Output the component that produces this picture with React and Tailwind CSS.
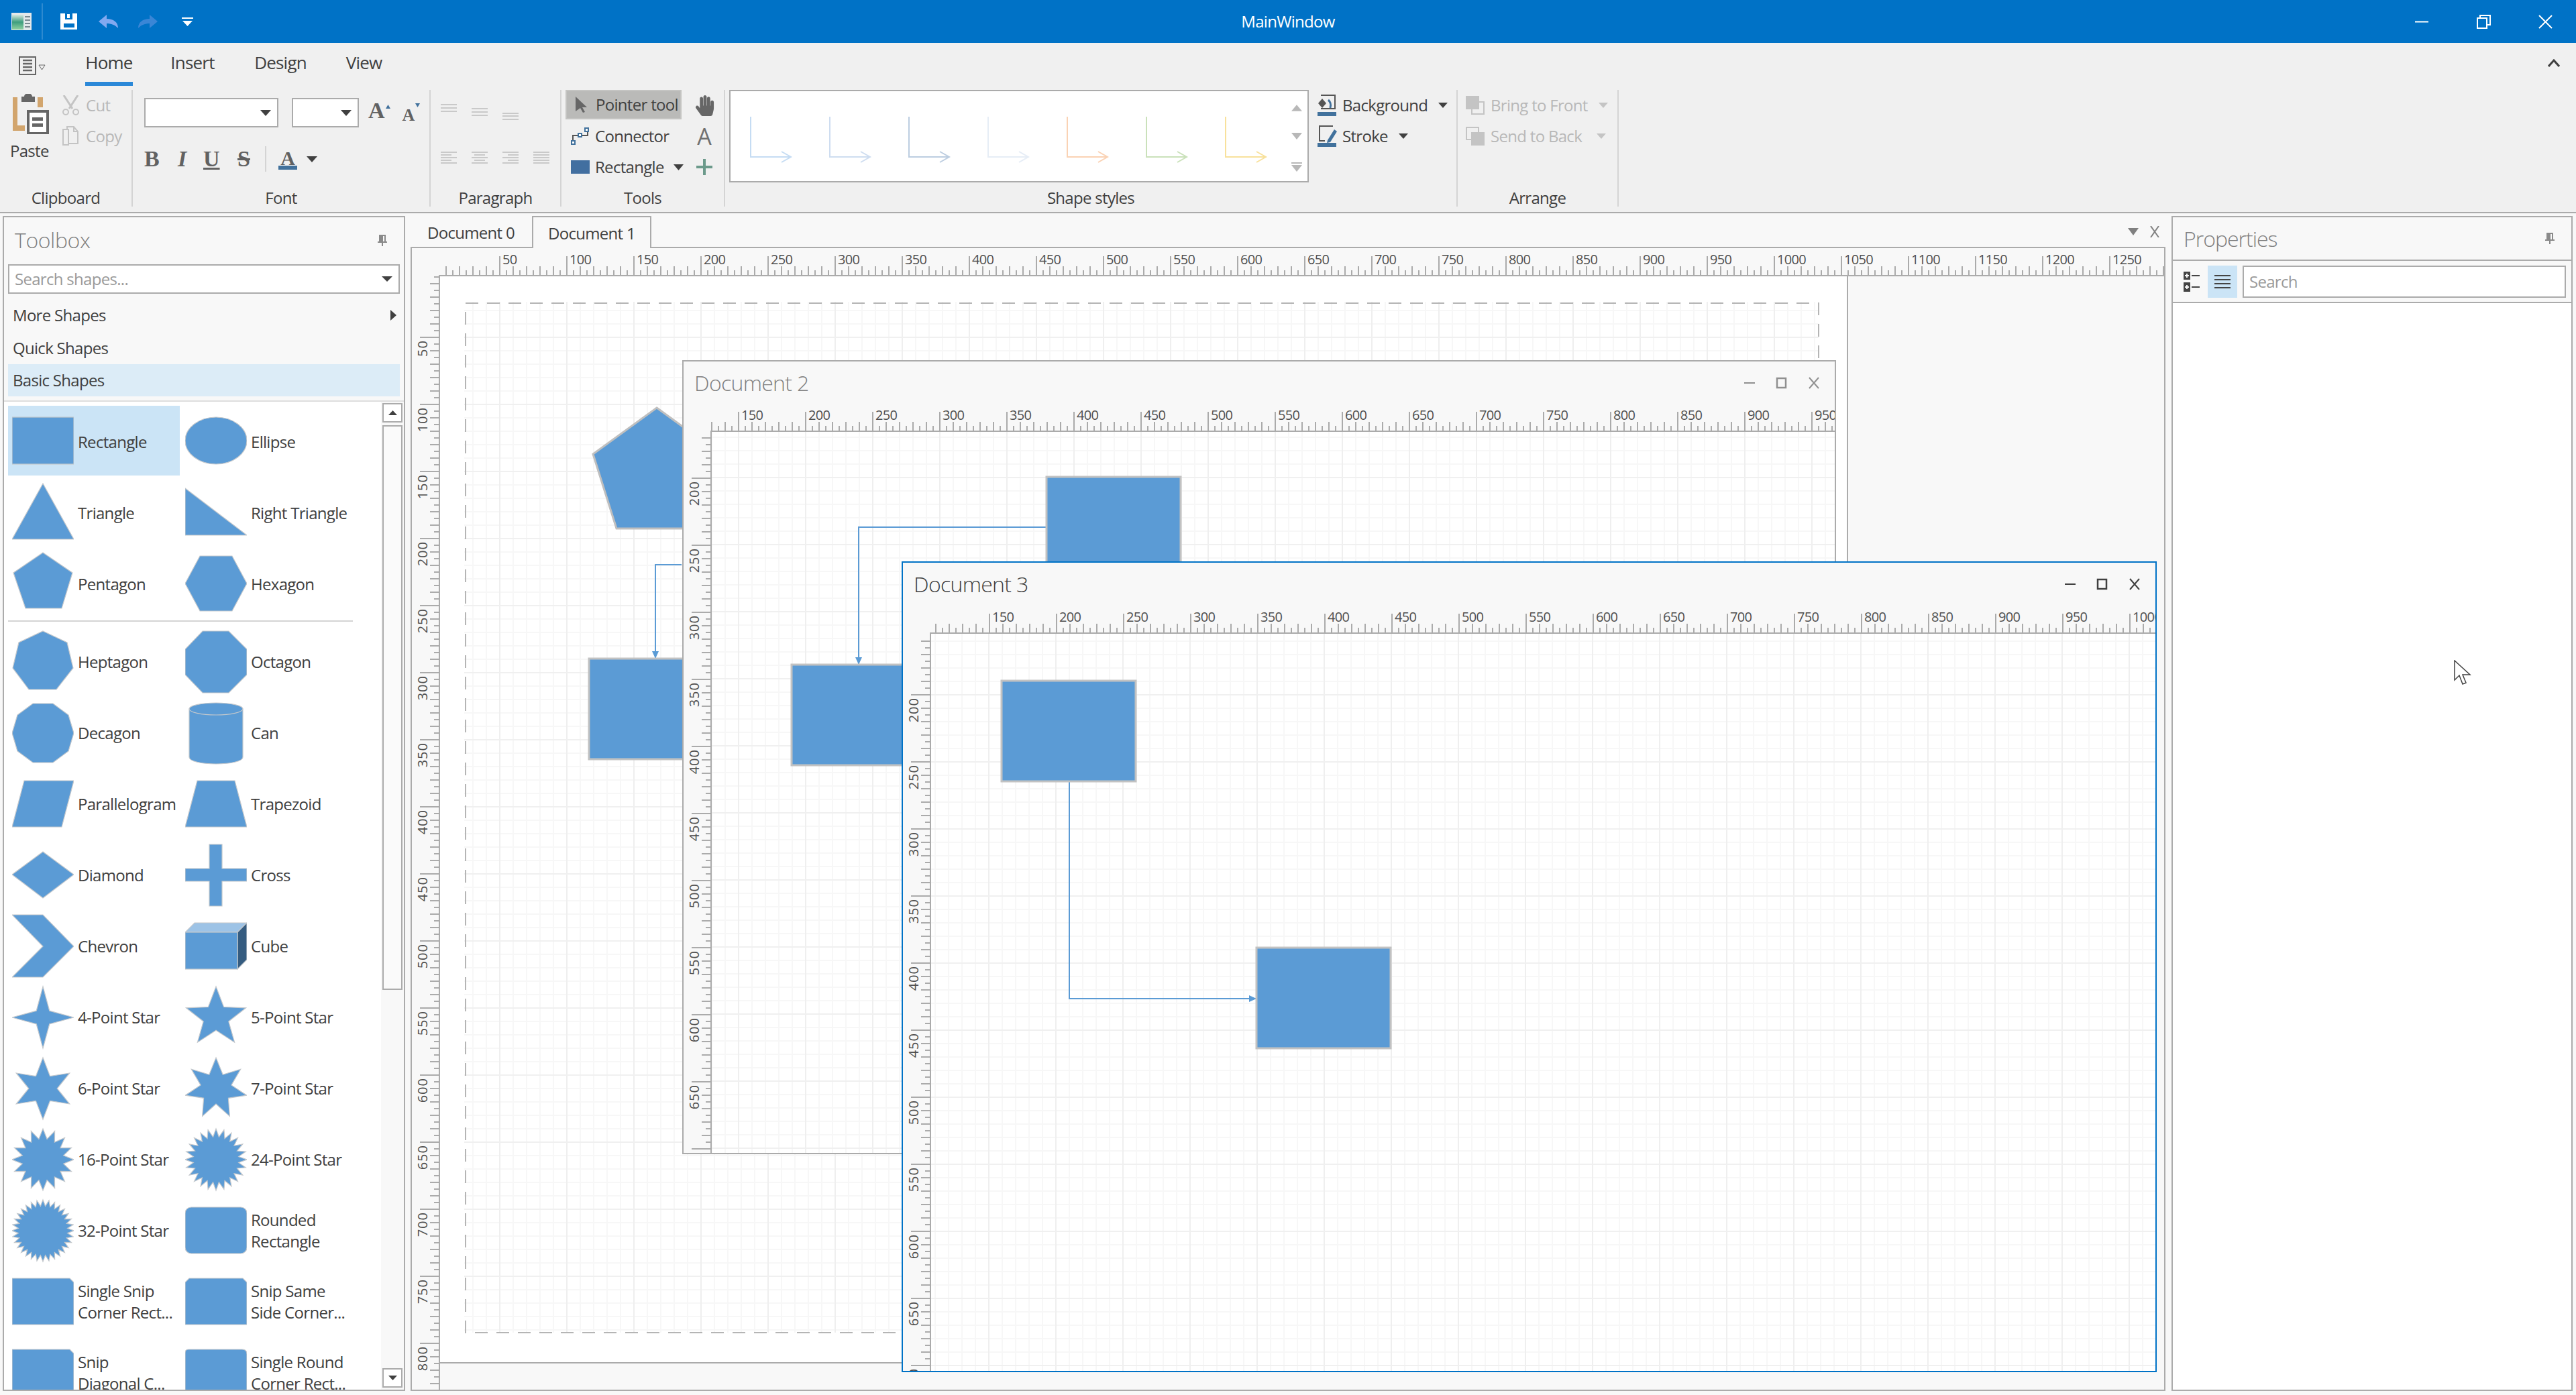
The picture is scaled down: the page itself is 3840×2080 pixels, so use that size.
import React from "react";
import { FaHandPaper } from "react-icons/fa";

const BLUE = "#5B9BD5";
const EDGE = "#C4C8CC";

function starPoints(n, rx, ry, inner, cy = 54) {
  const pts = [];
  for (let i = 0; i < n * 2; i++) {
    const r = i % 2 ? inner : 1;
    const a = -Math.PI / 2 + (i * Math.PI) / n;
    pts.push(`${(46 + rx * r * Math.cos(a)).toFixed(1)},${(cy + ry * r * Math.sin(a)).toFixed(1)}`);
  }
  return pts.join(" ");
}

const Poly = ({ points }) => <polygon points={points} />;

const firstRows = [
  { label: ["Rectangle"], selected: true, art: <rect x="0" y="17" width="92" height="70" /> },
  { label: ["Ellipse"], art: <ellipse cx="46" cy="52" rx="46" ry="35" /> },
  { label: ["Triangle"], art: <Poly points="46,10 92,93 0,93" /> },
  { label: ["Right Triangle"], art: <Poly points="0,17 92,87 0,87" /> },
  { label: ["Pentagon"], art: <Poly points="46,7 90,37 74,90 20,90 2,37" /> },
  { label: ["Hexagon"], art: <Poly points="22,12 70,12 92,53 70,94 22,94 0,53" /> },
];

const otherRows = [
  { label: ["Heptagon"], art: <Poly points="46,8 82,25 91,63 66,95 25,95 1,63 10,25" /> },
  { label: ["Octagon"], art: <Poly points="26,8 65,8 92,35 92,73 65,100 26,100 0,73 0,35" /> },
  { label: ["Decagon"], art: <Poly points="31,10 61,10 84,27 92,54 84,81 61,98 31,98 8,81 0,54 8,27" /> },
  {
    label: ["Can"],
    art: (
      <>
        <path d="M6 18 V90 C6 96 24 100 46 100 C68 100 86 96 86 90 V18 Z" />
        <ellipse cx="46" cy="18" rx="40" ry="9" />
      </>
    ),
  },
  { label: ["Parallelogram"], art: <Poly points="18,19 92,19 74,88 0,88" /> },
  { label: ["Trapezoid"], art: <Poly points="18,19 74,19 92,88 0,88" /> },
  { label: ["Diamond"], art: <Poly points="46,19 92,53 46,88 0,53" /> },
  { label: ["Cross"], art: <Poly points="36,8 55,8 55,44 92,44 92,63 55,63 55,100 36,100 36,63 0,63 0,44 36,44" /> },
  { label: ["Chevron"], art: <Poly points="0,7 46,7 92,54 46,100 0,100 46,54" /> },
  {
    label: ["Cube"],
    art: (
      <>
        <polygon points="0,33 14,19 92,19 78,33" fill="#9DC3E6" />
        <polygon points="78,33 92,19 92,74 78,88" fill="#355C80" />
        <rect x="0" y="33" width="78" height="55" />
      </>
    ),
  },
  { label: ["4-Point Star"], art: <Poly points={starPoints(4, 46, 46, 0.3)} /> },
  { label: ["5-Point Star"], art: <Poly points={starPoints(5, 47, 46, 0.42)} /> },
  { label: ["6-Point Star"], art: <Poly points={starPoints(6, 46, 46, 0.46)} /> },
  { label: ["7-Point Star"], art: <Poly points={starPoints(7, 47, 46, 0.5)} /> },
  { label: ["16-Point Star"], art: <Poly points={starPoints(16, 46, 46, 0.68)} /> },
  { label: ["24-Point Star"], art: <Poly points={starPoints(24, 46, 46, 0.74)} /> },
  { label: ["32-Point Star"], art: <Poly points={starPoints(32, 46, 46, 0.8)} /> },
  { label: ["Rounded", "Rectangle"], art: <rect x="0" y="19" width="92" height="69" rx="9" /> },
  { label: ["Single Snip", "Corner Rect..."], art: <Poly points="0,19 86,19 92,25 92,88 0,88" /> },
  { label: ["Snip Same", "Side Corner..."], art: <Poly points="6,19 86,19 92,25 92,88 0,88 0,25" /> },
  { label: ["Snip", "Diagonal C..."], art: <Poly points="0,19 86,19 92,25 92,88 6,88 0,82" /> },
  { label: ["Single Round", "Corner Rect..."], art: <path d="M5 19 H85 Q92 19 92 26 V88 H0 V24 Q0 19 5 19 Z" /> },
];

function ShapeItem({ item }) {
  return (
    <div className={`flex h-[104px] w-[256px] items-center gap-[6px] pl-[6px] ${item.selected ? "bg-[#CBE4F6]" : ""}`}>
      <svg width="92" height="104" viewBox="0 0 92 104" fill={BLUE} stroke={EDGE} strokeWidth="1.2" className="shrink-0">
        {item.art}
      </svg>
      <div className="pt-[3px] leading-[32px] whitespace-nowrap text-[#404040]">
        {item.label.map((line) => (
          <div key={line}>{line}</div>
        ))}
      </div>
    </div>
  );
}

const Caret = ({ w = 16, h = 9, color = "#404040", dir = "down" }) => (
  <svg width={w} height={h} viewBox={`0 0 ${w} ${h}`} className="shrink-0">
    {dir === "down" && <polygon points={`0,0 ${w},0 ${w / 2},${h}`} fill={color} />}
    {dir === "up" && <polygon points={`0,${h} ${w},${h} ${w / 2},0`} fill={color} />}
    {dir === "right" && <polygon points={`0,0 ${w},${h / 2} 0,${h}`} fill={color} />}
  </svg>
);

function Pin({ color = "#8A8A8A" }) {
  return (
    <svg width="14" height="17" viewBox="0 0 14 17">
      <path d="M2 0 H12 V10 H14 V12 H8 V17 H6 V12 H0 V10 H2 Z M8 2 V10 H10 V2 Z" fill={color} fillRule="evenodd" />
    </svg>
  );
}

function HRuler({ width, origin, start, strip = 42 }) {
  const ticks = [];
  for (let i = 0; origin + i * 10 <= width; i++) {
    const pos = origin + i * 10;
    if (pos < start) continue;
    const len = i % 10 === 0 ? 28 : i % 2 === 0 ? 13 : 7;
    ticks.push(<rect key={i} x={pos - 1} y={40 - len} width="2" height={len} fill="#ABABAB" />);
    if (i % 10 === 0)
      ticks.push(
        <text key={`t${i}`} x={pos + 4} y="24" fontSize="20" fill="#505050">
          {i * 5}
        </text>
      );
  }
  return (
    <svg width={width} height="42" className="shrink-0">
      <rect x={strip - 2} y="40" width={width} height="2" fill="#ABABAB" />
      {ticks}
    </svg>
  );
}

function VRuler({ height, origin, start }) {
  const ticks = [];
  for (let i = 0; origin + i * 10 <= height; i++) {
    const pos = origin + i * 10;
    if (pos < start) continue;
    const len = i % 10 === 0 ? 28 : i % 2 === 0 ? 13 : 7;
    ticks.push(<rect key={i} x={40 - len} y={pos - 1} width={len} height="2" fill="#ABABAB" />);
    if (i % 10 === 0)
      ticks.push(
        <text key={`t${i}`} transform={`translate(23 ${pos + 4}) rotate(-90)`} textAnchor="end" fontSize="20" letterSpacing="1" fill="#505050">
          {i * 5}
        </text>
      );
  }
  return (
    <svg width="42" height={height} className="shrink-0">
      <rect x="40" y="0" width="2" height={height} fill="#ABABAB" />
      {ticks}
    </svg>
  );
}

function GridPattern({ id, x, y }) {
  return (
    <pattern id={id} patternUnits="userSpaceOnUse" x={x} y={y} width="100" height="100">
      {[20, 40, 60, 80].map((n) => (
        <g key={n} fill="#F7F7F7">
          <rect x={n} y="0" width="2" height="100" />
          <rect x="0" y={n} width="100" height="2" />
        </g>
      ))}
      <rect x="0" y="0" width="2" height="100" fill="#EFEFEF" />
      <rect x="0" y="0" width="100" height="2" fill="#F0F0F0" />
    </pattern>
  );
}

const Box = ({ x, y }) => <rect x={x} y={y} width="200" height="150" fill={BLUE} stroke="#C2C2C2" strokeWidth="3" />;

function Connector({ d, tip, dir }) {
  const head =
    dir === "down"
      ? `${tip[0] - 5},${tip[1] - 11} ${tip[0] + 5},${tip[1] - 11} ${tip[0]},${tip[1]}`
      : `${tip[0] - 11},${tip[1] - 5} ${tip[0] - 11},${tip[1] + 5} ${tip[0]},${tip[1]}`;
  return (
    <>
      <path d={d} fill="none" stroke={BLUE} strokeWidth="2" />
      <polygon points={head} fill={BLUE} />
    </>
  );
}

function WinButtons({ color }) {
  return (
    <div className="flex items-center gap-[30px] pr-[22px]">
      <svg width="18" height="18" fill="none" stroke={color} strokeWidth="2">
        <path d="M1 9 H17" />
      </svg>
      <svg width="18" height="18" fill="none" stroke={color} strokeWidth="2.5">
        <rect x="2" y="2" width="13" height="14" />
      </svg>
      <svg width="18" height="18" fill="none" stroke={color} strokeWidth="2">
        <path d="M2 1 L16 17 M16 1 L2 17" />
      </svg>
    </div>
  );
}

function MdiWindow({ title, className, titleClass, buttonColor, hr, vr, children, bodyW, bodyH }) {
  return (
    <div className={`absolute flex flex-col overflow-hidden bg-[#F8F8F8] border-2 ${className}`}>
      <div className={`flex shrink-0 items-center justify-between pl-[16px] ${titleClass}`}>
        <span className="text-[32px] font-light tracking-[-0.7px]">{title}</span>
        <WinButtons color={buttonColor} />
      </div>
      <HRuler {...hr} />
      <div className="flex min-h-0 flex-1">
        <VRuler {...vr} />
        <svg width={bodyW} height={bodyH} className="shrink-0 bg-white">
          {children}
        </svg>
      </div>
    </div>
  );
}

function Group({ title, className, children, bodyClass }) {
  return (
    <div className={`flex h-[174px] shrink-0 flex-col border-r-2 border-[#D4D4D4] ${className}`}>
      <div className={`h-[146px] ${bodyClass}`}>{children}</div>
      <div className="h-[28px] pt-[1px] text-center leading-[28px] text-[#404040]">{title}</div>
    </div>
  );
}

function AlignIcon({ rows, height }) {
  return (
    <svg width="24" height={height} fill="#C9C9C9" className="shrink-0">
      {rows.map(([x, y, w]) => (
        <rect key={y} x={x} y={y} width={w} height="2" />
      ))}
    </svg>
  );
}

const slab = "font-['Liberation_Serif',serif] font-bold text-[#616161] leading-none tracking-normal";

const styleColors = ["#C5DCF3", "#CEDDF0", "#BCCDE0", "#E6EDF6", "#FAD2B4", "#CAE1BA", "#F8E19C"];

export default function App() {
  return (
    <div className="flex h-[2080px] w-[3840px] flex-col overflow-hidden bg-[#F8F8F8] font-['Open_Sans',sans-serif] text-[24px] tracking-[-0.7px]">
      {/* Title bar */}
      <div className="grid h-16 shrink-0 grid-cols-[1fr_auto_1fr] items-center bg-[#0072C6] text-white">
        <div className="flex items-center pl-[17px]">
          <svg width="30" height="26" viewBox="0 0 30 26">
            <defs>
              <linearGradient id="appIcon" x1="0" y1="0" x2="0" y2="1">
                <stop offset="0" stopColor="#D8E8E0" />
                <stop offset="0.5" stopColor="#3F9E7E" />
                <stop offset="1" stopColor="#8FD0A0" />
              </linearGradient>
            </defs>
            <rect width="30" height="26" fill="#E4E8EA" />
            <rect x="1" y="3" width="17" height="22" fill="url(#appIcon)" />
            <rect x="20" y="5" width="8" height="2" fill="#7A8A90" />
            <rect x="20" y="10" width="8" height="2" fill="#7A8A90" />
            <rect x="20" y="15" width="8" height="2" fill="#7A8A90" />
            <rect x="20" y="20" width="8" height="2" fill="#7A8A90" />
          </svg>
          <div className="ml-[15px] h-[54px] w-[2px] bg-[#2E8AD0]" />
          <svg className="ml-[26px]" width="26" height="24" viewBox="0 0 26 24">
            <path fillRule="evenodd" fill="#FFFFFF" d="M0 0 H25 V24 H0 Z M7 0 V9 H18 V0 Z M5 15 V21 H21 V15 Z" />
            <rect x="10" y="1" width="4" height="6" fill="#FFFFFF" />
          </svg>
          <svg className="ml-[31px]" width="30" height="20" viewBox="0 0 30 20">
            <path d="M0 10 L12 0 V6 C22 6 29 11 29 20 C24 15 19 13 12 13 V20 Z" fill="#82A9F0" />
          </svg>
          <svg className="ml-[29px]" width="30" height="20" viewBox="0 0 30 20">
            <path d="M29 10 L17 0 V6 C7 6 0 11 0 20 C5 15 10 13 17 13 V20 Z" fill="#3A86D6" />
          </svg>
          <svg className="ml-[35px]" width="17" height="13" viewBox="0 0 17 13">
            <rect width="17" height="2" fill="#FFFFFF" />
            <polygon points="1,5 16,5 8.5,13" fill="#FFFFFF" />
          </svg>
        </div>
        <div>MainWindow</div>
        <div className="flex items-center justify-end gap-[71px] pr-[35px]">
          <svg width="21" height="21" fill="none" stroke="#FFFFFF" strokeWidth="2">
            <path d="M0 10.5 H20" />
          </svg>
          <svg width="21" height="21" fill="none" stroke="#FFFFFF" strokeWidth="2">
            <rect x="1" y="5" width="14" height="15" />
            <path d="M5 4 V1 H20 V15 H16" />
          </svg>
          <svg width="21" height="21" fill="none" stroke="#FFFFFF" strokeWidth="2">
            <path d="M1 1 L20 20 M20 1 L1 20" />
          </svg>
        </div>
      </div>

      {/* Ribbon */}
      <div className="h-[254px] shrink-0 border-b-2 border-[#ABABAB] bg-[#F0F0F0] text-[#404040]">
        <div className="flex h-[66px] items-start pl-[28px] text-[26px] tracking-[-0.8px]">
          <svg className="mt-[20px] shrink-0" width="40" height="28" viewBox="0 0 40 28" fill="none" stroke="#666666" strokeWidth="2">
            <rect x="1" y="1" width="24" height="26" />
            <path d="M6 6 H20 M6 11 H20 M6 16 H20 M6 21 H20" strokeWidth="2.5" />
            <polygon points="30,13 39,13 34.5,20" strokeWidth="1" />
          </svg>
          <div className="ml-[59px] flex h-16 w-[71px] items-center justify-center border-b-[6px] border-[#2B88D8] text-[#3A3A3A]">Home</div>
          <div className="ml-[57px] flex h-16 w-[64px] items-center justify-center border-b-[6px] border-transparent">Insert</div>
          <div className="ml-[60px] flex h-16 w-[78px] items-center justify-center border-b-[6px] border-transparent">Design</div>
          <div className="ml-[58px] flex h-16 w-[55px] items-center justify-center border-b-[6px] border-transparent">View</div>
          <svg className="ml-auto mr-[24px] mt-[24px]" width="18" height="12" fill="none" stroke="#404040" strokeWidth="3">
            <path d="M1 11 L9 2 L17 11" />
          </svg>
        </div>

        <div className="mt-[4px] flex">
          <Group title="Clipboard" className="w-[198px]" bodyClass="flex pl-[19px]">
            <div className="w-[54px] shrink-0">
              <svg className="mt-[6px]" width="54" height="60" viewBox="0 0 54 60">
                <path d="M0 5 H7 V47 H18 V55 H0 Z" fill="#D2A56D" />
                <rect x="37" y="5" width="8" height="15" fill="#D2A56D" />
                <path d="M13 4 H17 A5 4 0 0 1 29 4 H33 V12 H13 Z" fill="#666666" />
                <rect x="23" y="26" width="29" height="33" fill="#FFFFFF" stroke="#666666" strokeWidth="4" />
                <rect x="29" y="35" width="16" height="5" fill="#666666" />
                <rect x="29" y="44" width="16" height="5" fill="#666666" />
              </svg>
              <div className="-ml-[4px] mt-[10px] w-[54px] text-center leading-[30px]">Paste</div>
            </div>
            <div className="ml-[19px] text-[#B8B8B8]">
              <div className="flex h-[46px] items-center gap-[9px]">
                <svg width="27" height="30" viewBox="0 0 27 30" fill="none" stroke="#C4C4C4" strokeWidth="2">
                  <path d="M3 0 L16 20 M24 0 L11 20" strokeWidth="3" />
                  <circle cx="6" cy="25" r="4" />
                  <circle cx="21" cy="25" r="4" />
                </svg>
                <span>Cut</span>
              </div>
              <div className="flex h-[46px] items-center gap-[9px]">
                <svg width="27" height="30" viewBox="0 0 27 30" fill="none" stroke="#C4C4C4" strokeWidth="2">
                  <path d="M2 5 H10 V28 H2 Z" />
                  <path d="M10 26 H24 V8 L18 1 H8 V5" />
                  <path d="M18 1 V8 H24" />
                </svg>
                <span>Copy</span>
              </div>
            </div>
          </Group>

          <Group title="Font" className="w-[444px]" bodyClass="pl-[17px] pt-[12px]">
            <div className="flex items-start">
              <div className="flex h-[44px] w-[200px] items-center justify-end border-2 border-[#ABABAB] bg-white pr-[9px]">
                <Caret />
              </div>
              <div className="ml-[20px] flex h-[44px] w-[100px] items-center justify-end border-2 border-[#ABABAB] bg-white pr-[9px]">
                <Caret />
              </div>
              <div className="relative ml-[14px] mt-[2px]">
                <span className={`${slab} text-[34px]`}>A</span>
                <svg className="absolute right-[-8px] top-[8px]" width="7" height="6">
                  <polygon points="0,6 7,6 3.5,0" fill="#41719C" />
                </svg>
              </div>
              <div className="relative ml-[26px] mt-[7px]">
                <span className={`${slab} text-[26px]`}>A</span>
                <svg className="absolute right-[-8px] top-[1px]" width="7" height="6">
                  <polygon points="0,0 7,0 3.5,6" fill="#41719C" />
                </svg>
              </div>
            </div>
            <div className="mt-[28px] flex h-[38px] items-center">
              <span className={`${slab} w-[23px] text-[34px]`}>B</span>
              <span className={`${slab} ml-[27px] w-[13px] text-[34px] italic`}>I</span>
              <span className={`${slab} ml-[25px] w-[24px] text-[34px] underline`}>U</span>
              <span className={`${slab} ml-[27px] w-[19px] text-[34px] line-through`}>S</span>
              <div className="ml-[22px] h-[38px] w-[2px] bg-[#D4D4D4]" />
              <div className="ml-[18px] flex w-[28px] flex-col items-center">
                <span className={`${slab} h-[24px] text-[30px]`}>A</span>
                <div className="mt-[2px] h-[6px] w-[28px] bg-[#41719C]" />
              </div>
              <div className="ml-[14px]">
                <Caret />
              </div>
            </div>
          </Group>

          <Group title="Paragraph" className="w-[195px]" bodyClass="pl-[15px] pt-[21px]">
            <div className="flex items-start gap-[22px]">
              <AlignIcon height={24} rows={[[0, 0, 24], [0, 5, 24], [0, 10, 24]]} />
              <AlignIcon height={24} rows={[[0, 6, 24], [0, 11, 24], [0, 16, 24]]} />
              <AlignIcon height={24} rows={[[0, 13, 24], [0, 17, 24], [0, 22, 24]]} />
            </div>
            <div className="mt-[47px] flex gap-[22px]">
              <AlignIcon height={20} rows={[[0, 0, 24], [0, 4, 16], [0, 8, 24], [0, 12, 16], [0, 16, 24]]} />
              <AlignIcon height={20} rows={[[0, 0, 24], [4, 4, 16], [0, 8, 24], [4, 12, 16], [0, 16, 24]]} />
              <AlignIcon height={20} rows={[[0, 0, 24], [8, 4, 16], [0, 8, 24], [8, 12, 16], [0, 16, 24]]} />
              <AlignIcon height={20} rows={[[0, 0, 24], [0, 4, 24], [0, 8, 24], [0, 12, 24], [0, 16, 24]]} />
            </div>
          </Group>

          <Group title="Tools" className="w-[244px]" bodyClass="flex pl-[6px]">
            <div className="w-[173px] shrink-0">
              <div className="flex h-[44px] items-center border-2 border-[#C4C4C2] bg-[#BABAB8] pl-[13px]">
                <svg width="30" height="24" viewBox="0 0 30 24" className="shrink-0">
                  <polygon points="0,0 17,16 10,16 14,23 11,24 7,17 0,22" fill="#666666" />
                </svg>
                <span className="whitespace-nowrap">Pointer tool</span>
              </div>
              <div className="mt-[2px] flex h-[46px] items-center pl-[8px]">
                <svg width="36" height="28" viewBox="0 0 36 28" className="shrink-0">
                  <path d="M3 22 V13 H12 M16 13 H25 V6" fill="none" stroke="#555555" strokeWidth="2" />
                  <g fill="#FFFFFF" stroke="#41719C" strokeWidth="2">
                    <rect x="1" y="21" width="5" height="5" />
                    <rect x="11" y="10" width="5" height="5" />
                    <rect x="21" y="2" width="5" height="5" />
                  </g>
                </svg>
                <span>Connector</span>
              </div>
              <div className="flex h-[46px] items-center pl-[8px]">
                <div className="mr-[8px] h-[20px] w-[28px] shrink-0 bg-[#426FA0]" />
                <span>Rectangle</span>
                <div className="-mr-[3px] ml-auto">
                  <Caret w={15} h={9} />
                </div>
              </div>
            </div>
            <div className="flex w-[60px] flex-col items-center pl-[8px]">
              <div className="flex h-[46px] items-center">
                <FaHandPaper size={31} color="#666666" />
              </div>
              <div className="flex h-[46px] items-center text-[34px] tracking-normal text-[#707070]">A</div>
              <div className="flex h-[46px] items-center">
                <svg width="24" height="24" fill="#6C9A8B">
                  <rect x="10" width="4" height="24" />
                  <rect y="10" width="24" height="4" />
                </svg>
              </div>
            </div>
          </Group>

          <Group title="Shape styles" className="w-[1092px]" bodyClass="flex pl-[6px]">
            <div className="h-[138px] w-[864px] shrink-0 border-2 border-[#ABABAB] bg-white">
              <svg width="860" height="134" viewBox="0 0 860 134">
                {styleColors.map((c, i) => {
                  const x = 30 + i * 118;
                  return (
                    <path key={c} d={`M${x} 38 V98 H${x + 60} M${x + 46} 90 L${x + 60} 98 L${x + 46} 106`} fill="none" stroke={c} strokeWidth="2" />
                  );
                })}
                <g fill="#B8B8B8">
                  <polygon points="836,29 852,29 844,21" transform="translate(0 -5) scale(1 1.2)" />
                  <polygon points="836,62 852,62 844,72" />
                  <rect x="836" y="106" width="16" height="2" />
                  <polygon points="836,110 852,110 844,120" />
                </g>
              </svg>
            </div>
            <div className="ml-[12px]">
              <div className="flex h-[46px] items-center">
                <svg width="30" height="32" viewBox="0 0 30 32" className="shrink-0">
                  <path d="M6 1 H27 V21 H6" fill="none" stroke="#555555" strokeWidth="2" />
                  <path d="M8 6 L14 13 L8 20 L2 13 Z" fill="#555555" />
                  <path d="M17 8 Q22 12 20 20" fill="none" stroke="#41719C" strokeWidth="3" />
                  <rect x="1" y="26" width="28" height="6" fill="#41719C" />
                </svg>
                <span className="ml-[8px]">Background</span>
                <div className="ml-[16px]">
                  <Caret w={14} h={8} />
                </div>
              </div>
              <div className="flex h-[46px] items-center">
                <svg width="30" height="32" viewBox="0 0 30 32" className="shrink-0">
                  <path d="M24 1 H4 V23 H12" fill="none" stroke="#555555" strokeWidth="2" />
                  <path d="M16 22 L26 6 L30 9 L20 25 L15 26 Z" fill="#41719C" />
                  <rect x="1" y="26" width="28" height="6" fill="#41719C" />
                </svg>
                <span className="ml-[8px]">Stroke</span>
                <div className="ml-[16px]">
                  <Caret w={14} h={8} />
                </div>
              </div>
            </div>
          </Group>

          <Group title="Arrange" className="w-[240px]" bodyClass="pl-[12px] text-[#B8B8B8]">
            <div className="flex h-[46px] items-center">
              <svg width="28" height="28" viewBox="0 0 28 28" className="shrink-0" fill="none" stroke="#C4C4C4" strokeWidth="2">
                <rect x="9" y="9" width="18" height="18" />
                <rect x="1" y="1" width="18" height="18" fill="#C4C4C4" />
              </svg>
              <span className="ml-[9px] whitespace-nowrap">Bring to Front</span>
              <div className="ml-[16px]">
                <Caret w={14} h={8} color="#C4C4C4" />
              </div>
            </div>
            <div className="flex h-[46px] items-center">
              <svg width="28" height="28" viewBox="0 0 28 28" className="shrink-0" fill="none" stroke="#C4C4C4" strokeWidth="2">
                <rect x="1" y="1" width="18" height="18" />
                <rect x="9" y="9" width="18" height="18" fill="#C4C4C4" />
              </svg>
              <span className="ml-[9px] whitespace-nowrap">Send to Back</span>
              <div className="ml-[22px]">
                <Caret w={14} h={8} color="#C4C4C4" />
              </div>
            </div>
          </Group>
        </div>
      </div>

      {/* Workspace */}
      <div className="flex min-h-0 flex-1 pb-[6px] pt-[4px]">
        {/* Toolbox */}
        <div className="ml-[4px] flex w-[600px] shrink-0 flex-col overflow-hidden border-2 border-[#ABABAB]">
          <div className="flex h-[70px] shrink-0 items-center justify-between pb-[2px] pl-[16px] pr-[25px]">
            <span className="text-[32px] font-light tracking-[-0.4px] text-[#808080]">Toolbox</span>
            <Pin />
          </div>
          <div className="mx-[6px] flex h-[44px] shrink-0 items-center justify-between border-2 border-[#ABABAB] bg-white pl-[8px] pr-[9px]">
            <span className="text-[#9A9A9A]">Search shapes...</span>
            <Caret w={16} h={8} />
          </div>
          <div className="mt-[7px] flex h-[50px] shrink-0 items-center justify-between pl-[13px] pr-[11px] text-[#404040]">
            <span>More Shapes</span>
            <Caret w={9} h={16} dir="right" />
          </div>
          <div className="flex h-[48px] shrink-0 items-center pl-[13px] text-[#404040]">Quick Shapes</div>
          <div className="mx-[6px] flex h-[48px] shrink-0 items-center bg-[#DCECF7] pl-[7px] text-[#404040]">Basic Shapes</div>
          <div className="mt-[6px] flex min-h-0 flex-1 border-t-2 border-[#DEDEDE]">
            <div className="min-w-0 flex-1 overflow-hidden bg-white pl-[6px] pt-[6px]">
              <div className="grid grid-cols-[258px_258px] gap-y-[2px]">
                {firstRows.map((item) => (
                  <ShapeItem key={item.label[0]} item={item} />
                ))}
              </div>
              <div className="mb-[6px] mt-[4px] h-[2px] w-[514px] bg-[#D4D4D4]" />
              <div className="grid grid-cols-[258px_258px] gap-y-[2px]">
                {otherRows.map((item) => (
                  <ShapeItem key={item.label.join(" ")} item={item} />
                ))}
              </div>
            </div>
            <div className="flex w-[34px] shrink-0 flex-col items-center bg-[#F8F8F8] pb-[3px] pt-[2px]">
              <div className="flex h-[29px] w-[30px] items-center justify-center border-2 border-[#ABABAB] bg-white">
                <Caret w={13} h={7} dir="up" />
              </div>
              <div className="mt-[4px] h-[842px] w-[30px] border-2 border-[#ABABAB] bg-[#FAFAFA]" />
              <div className="mt-auto flex h-[29px] w-[30px] items-center justify-center border-2 border-[#ABABAB] bg-white">
                <Caret w={13} h={7} />
              </div>
            </div>
          </div>
        </div>

        {/* Document area */}
        <div className="ml-[8px] flex w-[2616px] shrink-0 flex-col">
          <div className="flex h-[46px] shrink-0 items-end text-[#404040]">
            <div className="flex h-[46px] w-[181px] items-center pl-[25px] pt-[3px]">Document 0</div>
            <div className="relative z-10 -mb-[2px] flex h-[48px] w-[178px] items-center border-x-2 border-t-2 border-[#ABABAB] bg-[#F8F8F8] pl-[22px] pt-[2px]">Document 1</div>
            <div className="ml-auto flex items-center gap-[17px] self-center pr-[9px]">
              <Caret w={16} h={11} color="#808080" />
              <svg width="14" height="17" fill="none" stroke="#808080" strokeWidth="2">
                <path d="M1 0 L13 17 M13 0 L1 17" />
              </svg>
            </div>
          </div>
          <div className="flex min-h-0 flex-1 flex-col border-2 border-[#ABABAB]">
            <HRuler width={2612} origin={31} start={51} />
            <div className="flex min-h-0 flex-1">
              <VRuler height={1660} origin={-9} start={1} />
              <div className="relative min-w-0 flex-1 overflow-hidden">
                <div className="h-[1621px] w-[2099px] border-b-2 border-r-2 border-[#ABABAB] bg-white">
                  <svg width="2097" height="1619">
                    <defs>
                      <GridPattern id="grid1" x="88" y="90" />
                    </defs>
                    <rect x="36" y="38" width="2019" height="1537" fill="url(#grid1)" />
                    <rect x="38" y="40" width="2017" height="1535" fill="none" stroke="#B5B5B5" strokeWidth="2" strokeDasharray="19 13" />
                    <polygon points="323,196 418,265 382,376 263,376 228,265" fill={BLUE} stroke="#BFBFBF" strokeWidth="3" />
                    <Connector d="M360 430 H321 V570" tip={[321, 570]} dir="down" />
                    <Box x={222} y={570} />
                  </svg>
                </div>

                <MdiWindow
                  title="Document 2"
                  className="left-[361px] top-[125px] h-[1184px] w-[1720px] border-[#ABABAB]"
                  titleClass="h-[63px] text-[#808080]"
                  buttonColor="#909090"
                  hr={{ width: 1716, origin: -218, start: 42 }}
                  vr={{ height: 1075, origin: -331, start: 9 }}
                  bodyW={1674}
                  bodyH={1075}
                >
                  <defs>
                    <GridPattern id="grid2" x="39" y="67" />
                  </defs>
                  <rect width="1674" height="1075" fill="url(#grid2)" />
                  <Connector d="M499 142 H219 V347" tip={[219, 347]} dir="down" />
                  <Box x={499} y={67} />
                  <Box x={119} y={347} />
                </MdiWindow>

                <MdiWindow
                  title="Document 3"
                  className="left-[688px] top-[425px] h-[1209px] w-[1871px] border-[#0072C6]"
                  titleClass="h-[64px] text-[#404040]"
                  buttonColor="#404040"
                  hr={{ width: 1867, origin: -171, start: 49 }}
                  vr={{ height: 1099, origin: -309, start: 11 }}
                  bodyW={1825}
                  bodyH={1099}
                >
                  <defs>
                    <GridPattern id="grid3" x="85" y="90" />
                  </defs>
                  <rect width="1825" height="1099" fill="url(#grid3)" />
                  <Connector d="M206 221 V544 H485" tip={[485, 544]} dir="right" />
                  <Box x={105} y={70} />
                  <Box x={485} y={468} />
                </MdiWindow>
              </div>
            </div>
          </div>
        </div>

        {/* Properties */}
        <div className="relative ml-[9px] flex w-[598px] shrink-0 flex-col border-2 border-[#ABABAB]">
          <div className="flex h-[65px] shrink-0 items-center justify-between border-b-2 border-[#ABABAB] pl-[16px] pr-[25px]">
            <span className="text-[32px] font-light tracking-[-1px] text-[#808080]">Properties</span>
            <Pin />
          </div>
          <div className="flex h-[63px] shrink-0 items-center border-b-2 border-[#ABABAB] pl-[16px]">
            <svg width="24" height="30" viewBox="0 0 24 30" className="shrink-0">
              <path fillRule="evenodd" fill="#444444" d="M0 0 H10 V12 H0 Z M4 3 V5 H2 V7 H4 V9 H6 V7 H8 V5 H6 V3 Z" />
              <rect x="12" y="5" width="12" height="2" fill="#444444" />
              <path fillRule="evenodd" fill="#444444" d="M0 16 H10 V30 H0 Z M4 20 V22 H2 V24 H4 V26 H6 V24 H8 V22 H6 V20 Z" />
              <rect x="12" y="22" width="12" height="2" fill="#444444" />
            </svg>
            <div className="ml-[12px] flex h-[48px] w-[44px] shrink-0 flex-col items-center justify-center gap-[4px] bg-[#CBE4F6]">
              <div className="h-[2px] w-[24px] bg-[#444444]" />
              <div className="h-[2px] w-[24px] bg-[#444444]" />
              <div className="h-[2px] w-[24px] bg-[#444444]" />
              <div className="h-[2px] w-[24px] bg-[#444444]" />
            </div>
            <div className="ml-[8px] flex h-[48px] w-[482px] items-center border-2 border-[#ABABAB] bg-white pl-[8px] text-[#9A9A9A]">Search</div>
          </div>
          <div className="flex-1 bg-white" />
          {/* mouse pointer left in the shot */}
          <svg className="absolute left-[419px] top-[660px]" width="26" height="38" viewBox="0 0 26 38">
            <path d="M1 1 V30 L8 23 L13 36 L18 34 L13 22 L24 22 Z" fill="#FFFFFF" stroke="#404040" strokeWidth="1.5" />
          </svg>
        </div>
      </div>
    </div>
  );
}
